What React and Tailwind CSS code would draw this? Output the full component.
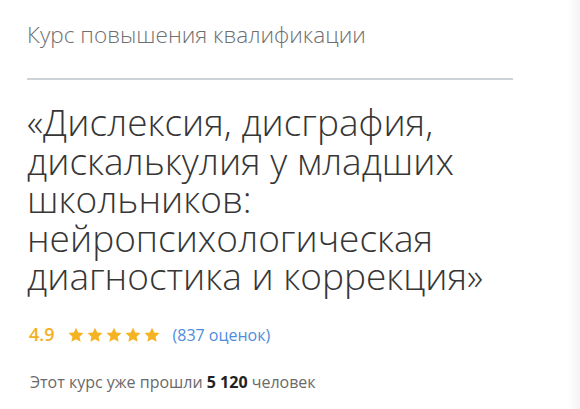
import React from "react";

const font = { fontFamily: '"Open Sans", "Noto Sans", sans-serif' };

function Star() {
  return (
    <svg viewBox="0 0 24 24" className="w-[18px] h-[18px]" fill="#f5b323">
      <path d="M12 2.2l2.95 6.5 7.05.72-5.3 4.75 1.5 6.98L12 17.6l-6.2 3.55 1.5-6.98L2 9.42l7.05-.72z" />
    </svg>
  );
}

export default function App() {
  return (
    <div className="w-[580px] h-[409px] bg-white flex overflow-hidden" style={font}>
      <div className="flex-1 flex flex-col pl-[27px] pt-[20px]">
        <div className="w-[486px]">
          <div className="text-[22.6px] leading-[30px] font-light text-[#6f6f6f]">
            Курс повышения квалификации
          </div>
          <div className="h-[2px] bg-[#cdd4d8] mt-[28px]" />
        </div>
        <h1 className="mt-[23px] text-[37px] leading-[38.5px] font-light text-[#363636] w-[540px] whitespace-nowrap">
          «Дислексия, дисграфия,
          <br />
          дискалькулия у младших
          <br />
          школьников:
          <br />
          нейропсихологическая
          <br />
          диагностика и коррекция»
        </h1>
        <div className="flex items-center mt-[26px] h-[26px]">
          <span className="text-[18px] font-semibold text-[#f2b01e] pl-[2px]">4.9</span>
          <div className="flex gap-[1px] ml-[12px]">
            <Star />
            <Star />
            <Star />
            <Star />
            <Star />
          </div>
          <span className="ml-[12px] text-[16px] text-[#4d8ddc]">(837 оценок)</span>
        </div>
        <div className="mt-[23px] text-[16px] leading-[22px] text-[#6a6a6a] pl-[3px]">
          Этот курс уже прошли <span className="font-bold text-[#222]">5 120</span> человек
        </div>
      </div>
      <div className="w-[24px] bg-gradient-to-r from-white to-[#f4f4f4]" />
    </div>
  );
}
